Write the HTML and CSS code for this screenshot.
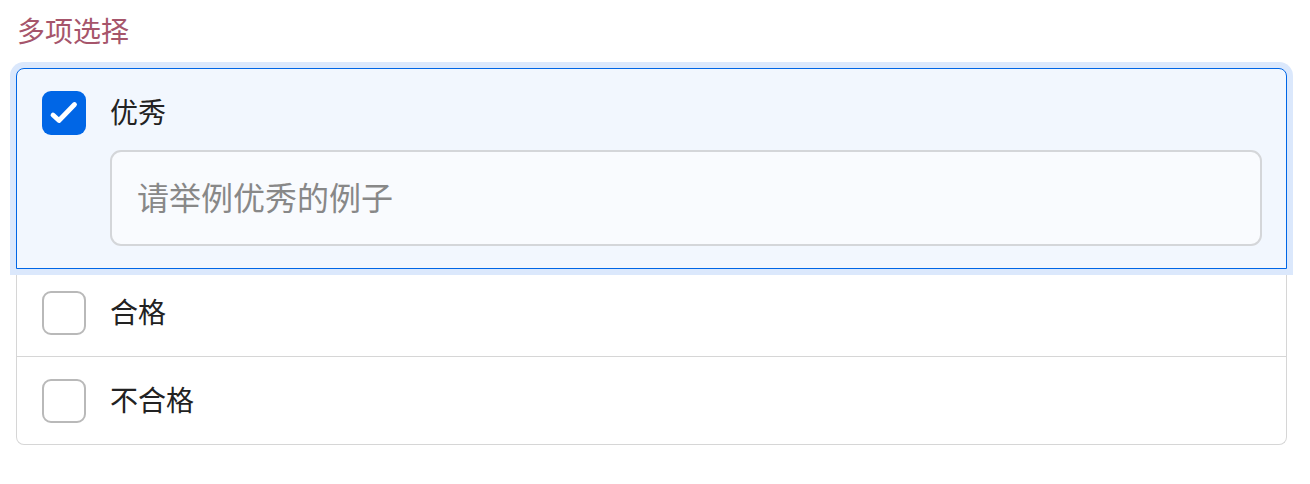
FILE: index.html
```html
<!DOCTYPE html>
<html lang="zh">
<head>
<meta charset="utf-8">
<link rel="stylesheet" href="styles.css">
</head>
<body>
<div class="page">
  <div class="title">多项选择</div>
  <div class="list">
    <div class="item active">
      <div class="row">
        <span class="check checked">
          <svg width="44" height="44" viewBox="0 0 44 44"><path d="M11 24 L17 29.5 L32.5 13.5" fill="none" stroke="#fff" stroke-width="4.8" stroke-linecap="round" stroke-linejoin="round"/></svg>
        </span>
        <span class="label">优秀</span>
      </div>
      <div class="field"><span class="placeholder">请举例优秀的例子</span></div>
    </div>
    <div class="item">
      <div class="row">
        <span class="check"></span>
        <span class="label">合格</span>
      </div>
    </div>
    <div class="item last">
      <div class="row">
        <span class="check"></span>
        <span class="label">不合格</span>
      </div>
    </div>
  </div>
</div>
</body>
</html>
```
FILE: styles.css
```css
html, body {
  margin: 0;
  padding: 0;
  background: #fff;
}
body {
  font-family: "Noto Sans CJK SC", "Noto Sans", sans-serif;
  color: #222;
}
.page {
  padding: 10px 23px 0 16px;
}
.title {
  font-size: 28px;
  line-height: 40px;
  color: #a6556b;
  padding-left: 1px;
  margin-bottom: 18px;
}
.list {
  display: flex;
  flex-direction: column;
}
.item {
  border: 1px solid #d6d6d6;
  border-top: 0;
  background: #fff;
  padding: 22px 24px 21px 25px;
}
.item.active {
  position: relative;
  z-index: 1;
  border: 1px solid #0066e6;
  border-radius: 8px 8px 0 0;
  background: #f2f7fe;
  box-shadow: 0 0 0 6px #dbe8fc;
  padding: 22px 24px 22px 25px;
}
.item.last {
  border-radius: 0 0 8px 8px;
}
.row {
  display: flex;
  align-items: center;
  height: 44px;
}
.check {
  width: 44px;
  height: 44px;
  box-sizing: border-box;
  border: 2px solid #b9b9b9;
  border-radius: 9px;
  background: #fff;
  flex: none;
  display: block;
}
.check.checked {
  border: 0;
  background: #0066e6;
}
.check svg {
  display: block;
}
.label {
  font-size: 28px;
  margin-left: 24px;
  line-height: 40px;
  padding-bottom: 4px;
}
.field {
  margin: 15px 0 0 68px;
  height: 96px;
  box-sizing: border-box;
  border: 2px solid #d4d6d9;
  border-radius: 11px;
  background: #f9fbfe;
  display: flex;
  align-items: center;
  padding: 0 0 5px 25px;
}
.placeholder {
  font-size: 32px;
  color: #888;
}
```
